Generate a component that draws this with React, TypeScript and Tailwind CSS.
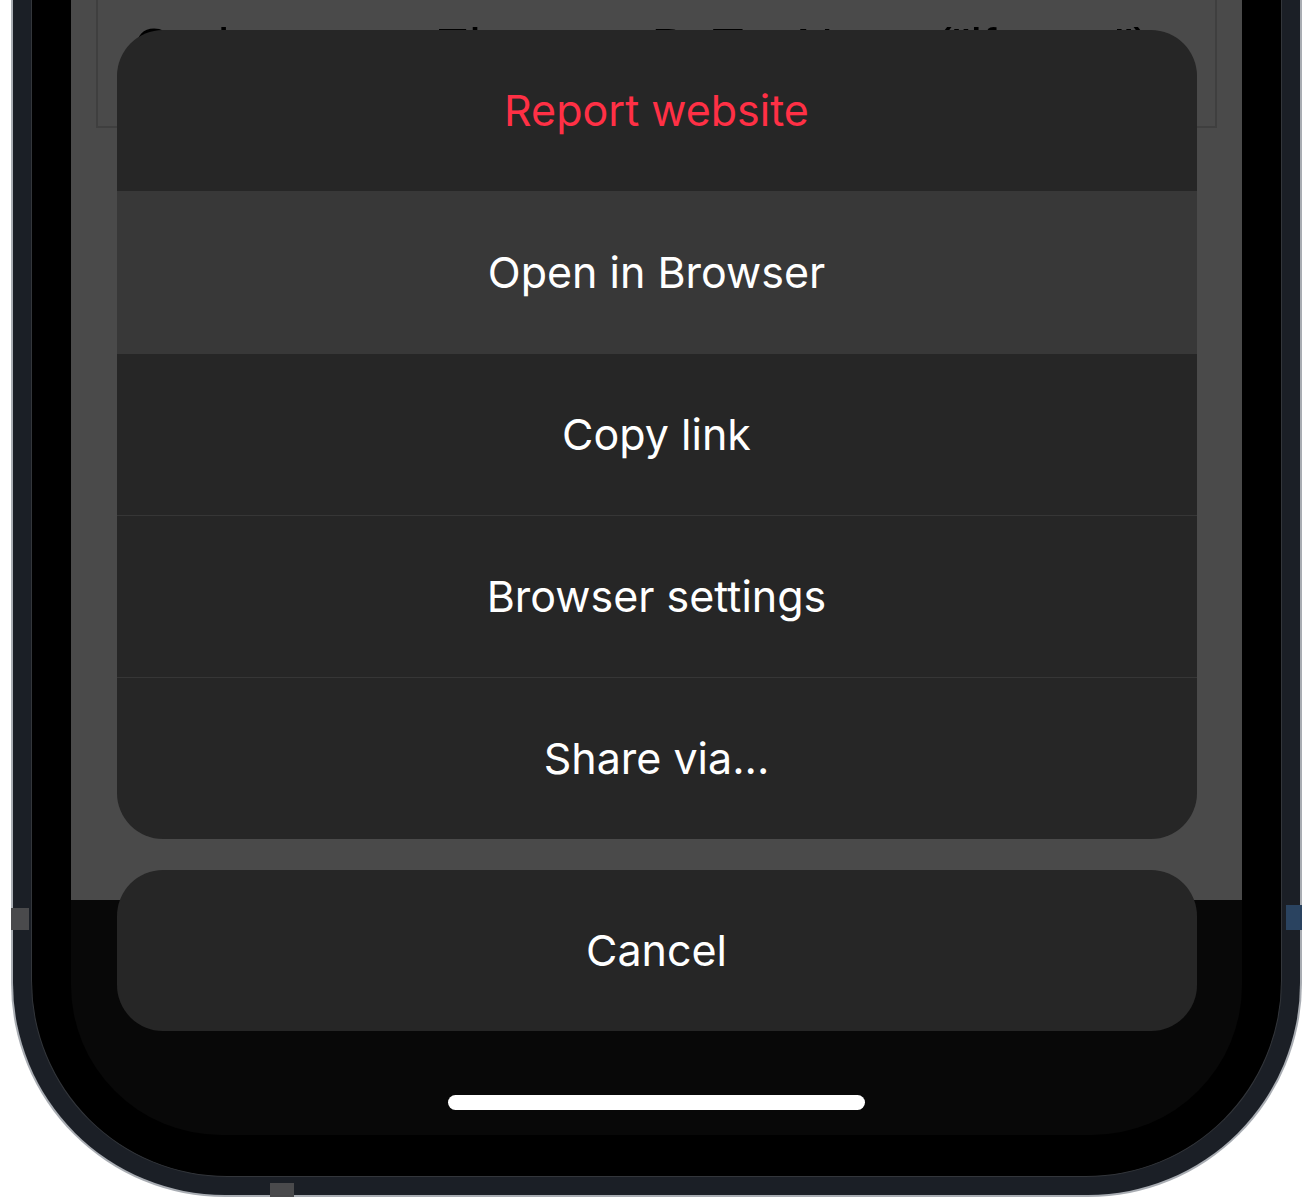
import React from 'react';

const rows = [
  { label: 'Open in Browser', active: true },
  { label: 'Copy link', active: false },
  { label: 'Browser settings', active: false },
  { label: 'Share via...', active: false },
];

export default function App() {
  return (
    <div className="w-[1312px] h-[1199px] bg-white overflow-hidden font-['Inter','Noto_Sans',sans-serif]">
      {/* phone frame */}
      <div className="relative ml-[11px] w-[1291px] h-[1197px] rounded-b-[214px] bg-[#1b1f26] border-x-2 border-b-2 border-[#a9adb3] px-[18px] pb-[18px]">
        {/* side reflections */}
        <div className="absolute left-[-2px] top-[908px] w-[18px] h-[22px] bg-[#4a4a4c]" />
        <div className="absolute right-[-2px] top-[905px] w-[16px] h-[25px] bg-[#2a4360]" />
        <div className="absolute left-[257px] bottom-[-2px] w-[24px] h-[14px] bg-[#4a4a4c]" />

        <div className="h-full rounded-b-[196px] bg-black border-x border-b border-[#33363b] px-[39px] pb-[41px]">
          {/* screen */}
          <div className="relative h-full rounded-b-[150px] overflow-hidden flex flex-col">
            <div className="h-[900px] bg-[#4a4a4a] px-[25px]">
              <div className="h-[128px] border-x-2 border-b-2 border-[#3f3f3f] overflow-hidden pl-[36px] pt-[21px]">
                <p className="whitespace-nowrap text-[52px] leading-none text-black font-['Liberation_Sans',sans-serif]">
                  Code: ret.getElementsByTagName("iframe")
                </p>
              </div>
            </div>
            <div className="flex-1 bg-[#080808]" />

            {/* action sheet overlay */}
            <div className="absolute inset-0 flex flex-col items-center pt-[30px]">
              <div className="w-[1080px] rounded-[46px] bg-[#262626] overflow-hidden flex flex-col">
                <div className="h-[161px] flex items-center justify-center text-[43px] text-[#ff3045]">
                  Report website
                </div>
                {rows.map((r, i) => (
                  <div
                    key={r.label}
                    className={
                      r.active
                        ? 'h-[163px] flex items-center justify-center text-[43px] text-white bg-[#383838]'
                        : i > 1
                        ? 'h-[162px] flex items-center justify-center text-[43px] text-white border-t border-[#363636]'
                        : 'h-[161px] flex items-center justify-center text-[43px] text-white'
                    }
                  >
                    {r.label}
                  </div>
                ))}
              </div>

              <div className="mt-[31px] w-[1080px] h-[161px] rounded-[46px] bg-[#262626] flex items-center justify-center text-[43px] text-white">
                Cancel
              </div>

              <div className="mt-[64px] w-[417px] h-[15px] rounded-full bg-white" />
            </div>
          </div>
        </div>
      </div>
    </div>
  );
}
